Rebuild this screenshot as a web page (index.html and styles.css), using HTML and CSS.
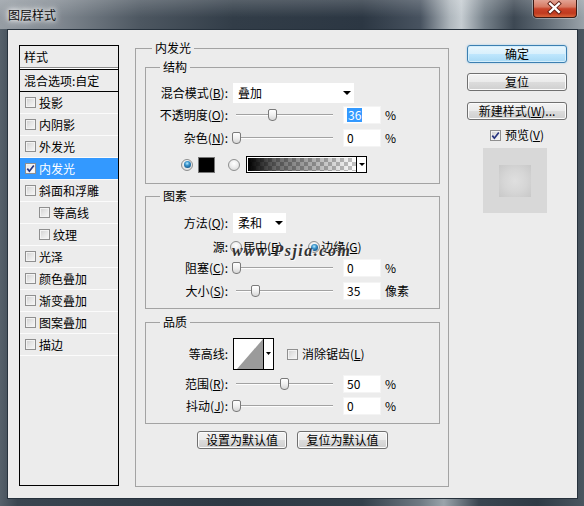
FILE: index.html
```html
<!DOCTYPE html>
<html lang="zh-CN">
<head>
<meta charset="utf-8">
<title>图层样式</title>
<link rel="stylesheet" href="styles.css">
</head>
<body>
<div class="window">
  <div class="titlebar">
    <span class="title">图层样式</span>
    <div class="close">
      <svg width="44" height="18" viewBox="0 0 44 18">
        <path d="M17.5 4.5 L26.5 13 M26.5 4.5 L17.5 13" stroke="#5a1a10" stroke-width="4.2" stroke-linecap="square" fill="none"/>
        <path d="M17.5 4.5 L26.5 13 M26.5 4.5 L17.5 13" stroke="#ffffff" stroke-width="2.4" stroke-linecap="square" fill="none"/>
      </svg>
    </div>
  </div>
  <div class="client">
    <div class="stylelist">
      <div class="list-head">样式</div>
      <div class="list-blend">混合选项:自定</div>
      <div class="item"><span class="cb"></span>投影</div>
      <div class="item"><span class="cb"></span>内阴影</div>
      <div class="item"><span class="cb"></span>外发光</div>
      <div class="item sel"><span class="cb"><svg class="ck" width="9" height="9" viewBox="0 0 9 9"><path d="M1.3 4.6 L3.4 7.2 L7.8 1.4" fill="none" stroke="#27347f" stroke-width="1.7"/></svg></span>内发光</div>
      <div class="item"><span class="cb"></span>斜面和浮雕</div>
      <div class="item sub"><span class="cb"></span>等高线</div>
      <div class="item sub"><span class="cb"></span>纹理</div>
      <div class="item"><span class="cb"></span>光泽</div>
      <div class="item"><span class="cb"></span>颜色叠加</div>
      <div class="item"><span class="cb"></span>渐变叠加</div>
      <div class="item"><span class="cb"></span>图案叠加</div>
      <div class="item"><span class="cb"></span>描边</div>
    </div>

    <fieldset class="panel">
      <legend>内发光</legend>

      <fieldset class="group g1">
        <legend>结构</legend>
        <div class="row r-sel">
          <span class="lbl">混合模式(<u>B</u>):</span>
          <div class="select sel-blend"><span>叠加</span><span class="tri"></span></div>
        </div>
        <div class="row r-slide r-op">
          <span class="lbl">不透明度(<u>O</u>):</span>
          <div class="slider"><span class="thumb" style="left:35px"></span></div>
          <span class="num"><span class="hl">36</span></span>
          <span class="unit">%</span>
        </div>
        <div class="row r-slide r-noise">
          <span class="lbl">杂色(<u>N</u>):</span>
          <div class="slider"><span class="thumb" style="left:-1px"></span></div>
          <span class="num">0</span>
          <span class="unit">%</span>
        </div>
        <div class="row r-fill">
          <span class="radio on"></span>
          <span class="swatch"></span>
          <span class="radio r-grad"></span>
          <div class="grad"><span class="grad-fill"></span><span class="grad-arrow"><span class="tri tri-s"></span></span></div>
        </div>
      </fieldset>

      <fieldset class="group g2">
        <legend>图素</legend>
        <div class="row r-sel">
          <span class="lbl">方法(<u>Q</u>):</span>
          <div class="select sel-method"><span>柔和</span><span class="tri"></span></div>
        </div>
        <div class="row r-src">
          <span class="lbl">源:</span>
          <span class="radio radio-a"></span><span class="rtext">居中(<u>E</u>)</span>
          <span class="radio on radio-b"></span><span class="rtext">边缘(<u>G</u>)</span>
          <span class="watermark">www.Psjia.com</span>
        </div>
        <div class="row r-slide r-choke">
          <span class="lbl">阻塞(<u>C</u>):</span>
          <div class="slider"><span class="thumb" style="left:-1px"></span></div>
          <span class="num">0</span>
          <span class="unit">%</span>
        </div>
        <div class="row r-slide r-size">
          <span class="lbl">大小(<u>S</u>):</span>
          <div class="slider"><span class="thumb" style="left:18px"></span></div>
          <span class="num">35</span>
          <span class="unit">像素</span>
        </div>
      </fieldset>

      <fieldset class="group g3">
        <legend>品质</legend>
        <div class="row r-contour">
          <span class="lbl">等高线:</span>
          <svg class="contour" width="41" height="32" viewBox="0 0 41 32">
            <rect x="0.5" y="0.5" width="40" height="31" fill="#ffffff" stroke="#000000"/>
            <polygon points="4,31 30,1 30,31" fill="#9b9b9b"/>
            <line x1="30.5" y1="0" x2="30.5" y2="32" stroke="#000000"/>
            <polygon points="33,14 38,14 35.5,17" fill="#000000"/>
          </svg>
          <span class="cb cb-aa"></span>
          <span class="rtext aa-text">消除锯齿(<u>L</u>)</span>
        </div>
        <div class="row r-slide r-range">
          <span class="lbl">范围(<u>R</u>):</span>
          <div class="slider"><span class="thumb" style="left:47px"></span></div>
          <span class="num">50</span>
          <span class="unit">%</span>
        </div>
        <div class="row r-slide r-jitter">
          <span class="lbl">抖动(<u>J</u>):</span>
          <div class="slider"><span class="thumb" style="left:-1px"></span></div>
          <span class="num">0</span>
          <span class="unit">%</span>
        </div>
      </fieldset>

      <div class="defaults">
        <button class="btn btn-def">设置为默认值</button>
        <button class="btn btn-def2">复位为默认值</button>
      </div>
    </fieldset>

    <div class="side">
      <button class="btn primary">确定</button>
      <button class="btn b-reset">复位</button>
      <button class="btn b-new">新建样式(<u>W</u>)...</button>
      <div class="preview-row">
        <span class="cb"><svg class="ck" width="9" height="9" viewBox="0 0 9 9"><path d="M1.3 4.6 L3.4 7.2 L7.8 1.4" fill="none" stroke="#27347f" stroke-width="1.7"/></svg></span>
        <span>预览(<u>V</u>)</span>
      </div>
      <div class="preview"><div class="preview-inner"></div></div>
    </div>
  </div>
</div>
</body>
</html>
```

FILE: styles.css
```css
* { box-sizing: border-box; }

html, body {
  margin: 0;
  padding: 0;
}

body {
  width: 584px;
  height: 506px;
  overflow: hidden;
  font-family: "Noto Sans CJK SC", "Liberation Sans", sans-serif;
  font-size: 12px;
  color: #000;
}

.window {
  width: 584px;
  height: 506px;
  padding: 0 6px 7px 7px;
  display: flex;
  flex-direction: column;
  background: linear-gradient(90deg, #56616b 0%, #3a4550 3%, #2e3944 40%, #34404b 62%, #6f7a83 72%, #9aa4ab 76%, #3a4550 82%, #2f3a45 92%, #4a5660 100%);
}

.titlebar {
  height: 29px;
  flex: none;
  display: flex;
  align-items: flex-start;
  margin: 0 -6px 0 -7px;
  padding: 0 6px 0 7px;
  background:
    linear-gradient(rgba(255,255,255,0.18), rgba(255,255,255,0) 60%),
    linear-gradient(90deg, #969da4 0%, #808890 10%, #4d5761 24%, #323d48 40%, #2c3743 62%, #485360 72%, #aeb6bc 77%, #c5ccd1 79%, #76818a 83%, #3d4853 88%, #5f6a74 93%, #9aa3aa 100%);
}

.title {
  margin: 8px 0 0 1px;
  line-height: 14px;
  font-size: 12px;
  color: #0c0c0c;
  text-shadow: 0 0 4px #fff, 0 0 7px rgba(255,255,255,0.9), 0 0 10px rgba(255,255,255,0.7);
}

.close {
  margin-left: auto;
  margin-right: 1px;
  width: 44px;
  height: 18px;
  border: 1px solid #3b1a14;
  border-top: none;
  border-radius: 0 0 4px 4px;
  background: linear-gradient(#e2a394 0%, #d77a63 40%, #c8432a 52%, #c03a1f 78%, #d9653b 100%);
  box-shadow: 0 0 0 1px rgba(255,255,255,0.35);
  display: flex;
}

.close svg { display: block; margin: -1px 0 0 -1px; }

.client {
  flex: 1;
  border: 1px solid #26313c;
  background: #ececec;
  display: flex;
  align-items: flex-start;
  padding-left: 11px;
}

/* left style list */
.stylelist {
  margin-top: 15px;
  width: 100px;
  height: 441px;
  border: 1px solid #000;
  flex: none;
}

.list-head {
  height: 22px;
  line-height: 22px;
  padding-left: 4px;
  border-bottom: 1px solid #8a8a8a;
  box-shadow: 0 1px 0 #fff;
}

.list-blend {
  margin-top: 1px;
  height: 23px;
  line-height: 21px;
  padding-left: 4px;
  border-top: 1px solid #000;
  border-bottom: 1px solid #000;
}

.item {
  height: 22px;
  border-bottom: 1px solid #fbfbfb;
  display: flex;
  align-items: center;
  gap: 3px;
  padding-left: 5px;
  white-space: nowrap;
}

.item.sub { padding-left: 19px; }

.item.sel {
  background: #3399ff;
  color: #fff;
}

.cb {
  width: 11px;
  height: 11px;
  flex: none;
  border: 1px solid #8f8f8f;
  background: linear-gradient(135deg, #cfcfcf 0%, #e6e6e6 50%, #f8f8f8 100%);
  box-shadow: inset 0 0 0 1px #f3f3f3;
  display: flex;
  align-items: center;
  justify-content: center;
}

.item.sel .cb {
  background: linear-gradient(135deg, #e4e4e4 0%, #f5f5f5 60%, #ffffff 100%);
}

.ck { display: block; }

/* main panel */
.panel {
  margin: 10px 0 0 16px;
  width: 314px;
  height: 447px;
  min-width: 0;
  padding: 0 8px 0 9px;
  border: 1px solid #a3a3a3;
  flex: none;
}

legend {
  padding: 0 3px;
  line-height: 16px;
}

.panel > legend { margin-left: 7px; }

.group {
  margin: 0;
  min-width: 0;
  padding: 0;
  border: 1px solid #a3a3a3;
}

.group > legend { margin-left: 14px; }

.g1 { margin-top: 3px; padding: 8px 0 10px; }
.g2 { margin-top: 4px; padding: 9px 0 8px; }
.g3 { margin-top: 5px; padding: 8px 0 8px; }

.row {
  display: flex;
  align-items: center;
  white-space: nowrap;
}

.lbl {
  width: 82px;
  margin-right: 5px;
  text-align: right;
  flex: none;
  line-height: 16px;
}

.r-sel { height: 20px; }

.select {
  height: 20px;
  background: #fff;
  display: flex;
  align-items: center;
  justify-content: space-between;
  padding: 0 3px 0 5px;
  line-height: 16px;
}

.sel-blend { width: 121px; }
.sel-method { width: 53px; }

.tri {
  width: 0;
  height: 0;
  border-left: 4px solid transparent;
  border-right: 4px solid transparent;
  border-top: 4px solid #000;
}

.tri-s {
  border-left-width: 3px;
  border-right-width: 3px;
  border-top-width: 3px;
}

.r-slide { height: 18px; }
.r-op { margin-top: 3px; }
.r-noise { margin-top: 5px; }
.r-choke { margin-top: 4px; }
.r-size { margin-top: 5px; }
.r-range { margin-top: 5px; }
.r-jitter { margin-top: 4px; }

.slider {
  width: 104px;
  height: 18px;
  position: relative;
  flex: none;
}

.slider::before {
  content: "";
  position: absolute;
  left: 3px;
  right: 4px;
  top: 8px;
  height: 1px;
  background: #a2a2a2;
  box-shadow: 0 1px 0 #fdfdfd;
}

.thumb {
  position: absolute;
  top: 3px;
  width: 9px;
  height: 12px;
  border: 1px solid #7a7a7a;
  border-radius: 2px 2px 4px 4px;
  background: linear-gradient(#ffffff 0%, #f0f0f0 50%, #d6d6d6 100%);
}

.num {
  width: 38px;
  height: 18px;
  margin-left: 6px;
  background: #fff;
  border: 1px solid #f4f4f4;
  padding-left: 3px;
  line-height: 16px;
  flex: none;
}

.hl {
  display: inline-block;
  background: #3399ff;
  color: #fff;
  line-height: 14px;
  padding: 0 1px;
}

.unit { margin-left: 4px; line-height: 16px; }

/* fill radios */
.r-fill {
  margin-top: 9px;
  padding-left: 35px;
  height: 17px;
}

.radio {
  width: 12px;
  height: 12px;
  flex: none;
  border-radius: 50%;
  border: 1px solid #8e8f8f;
  background: radial-gradient(circle at 50% 35%, #ffffff 0%, #eeeeee 45%, #d2d2d2 100%);
  display: flex;
  align-items: center;
  justify-content: center;
}

.radio.on::after {
  content: "";
  width: 7px;
  height: 7px;
  border-radius: 50%;
  background: radial-gradient(circle at 45% 35%, #b9ecff 0%, #3c95cc 35%, #165d92 75%, #0f3f68 100%);
}

.swatch {
  width: 17px;
  height: 16px;
  margin-left: 5px;
  background: #000;
  border: 1px solid #777;
  flex: none;
}

.r-grad { margin-left: 13px; }

.grad {
  margin-left: 6px;
  width: 121px;
  height: 17px;
  border: 1px solid #000;
  padding: 1px 0 1px 1px;
  background: #fff;
  display: flex;
  flex: none;
}

.grad-fill {
  flex: 1;
  background:
    linear-gradient(90deg, #000 0%, rgba(0,0,0,0.6) 25%, rgba(0,0,0,0) 100%),
    repeating-conic-gradient(#c4c4c4 0 25%, #ffffff 0 50%) 0 0 / 8px 8px;
}

.grad-arrow {
  width: 10px;
  margin-top: -1px;
  margin-bottom: -1px;
  border-left: 1px solid #000;
  background: #fff;
  display: flex;
  align-items: center;
  justify-content: center;
}

/* source row */
.r-src {
  position: relative;
  height: 16px;
  margin-top: 6px;
}

.radio-a { margin-left: -3px; }
.radio-b { margin-left: 26px; }
.rtext { margin-left: 1px; line-height: 16px; }

.watermark {
  position: absolute;
  left: 86px;
  top: 3px;
  font-family: "Liberation Serif", serif;
  font-style: italic;
  font-weight: bold;
  font-size: 16px;
  line-height: 18px;
  letter-spacing: 1.5px;
  color: #333;
  text-shadow: 1px 1px 0 rgba(255,255,255,0.8);
}

/* contour row */
.r-contour { height: 32px; }
.contour { display: block; flex: none; }
.cb-aa { margin-left: 13px; }
.aa-text { margin-left: 4px; }

/* buttons */
.btn {
  font-family: inherit;
  font-size: 12px;
  color: #000;
  height: 18px;
  padding: 0;
  margin: 0;
  border: 1px solid #707070;
  border-radius: 3px;
  background: linear-gradient(#f3f3f3 0%, #ebebeb 48%, #dcdcdc 52%, #cfcfcf 100%);
  box-shadow: inset 0 0 0 1px #fbfbfb;
  line-height: 14px;
  white-space: nowrap;
}

.defaults {
  display: flex;
  justify-content: center;
  gap: 10px;
  margin-top: 7px;
}

.btn-def { width: 90px; }
.btn-def2 { width: 91px; }

.side {
  margin: 15px 0 0 18px;
  width: 100px;
  display: flex;
  flex-direction: column;
  flex: none;
}

.side .btn { width: 100px; }

.btn.primary {
  border-color: #3c7fb1;
  background: linear-gradient(#e9f6fd 0%, #d9f0fc 48%, #bee6fd 52%, #a7d9f5 100%);
  box-shadow: inset 0 0 0 1px #d4eefc, 0 0 2px rgba(80,170,230,0.6);
}

.b-reset { margin-top: 10px; }
.b-new { margin-top: 11px; }

.preview-row {
  margin-top: 7px;
  height: 16px;
  display: flex;
  align-items: center;
  justify-content: center;
  gap: 4px;
  line-height: 16px;
}

.preview {
  width: 64px;
  height: 65px;
  margin: 5px 0 0 16px;
  background: #d8d8d8;
  display: flex;
  align-items: center;
  justify-content: center;
}

.preview-inner {
  width: 32px;
  height: 32px;
  background: radial-gradient(circle, #dfdfdf 0%, #d6d6d6 50%, #c8c8c8 100%);
}
```
